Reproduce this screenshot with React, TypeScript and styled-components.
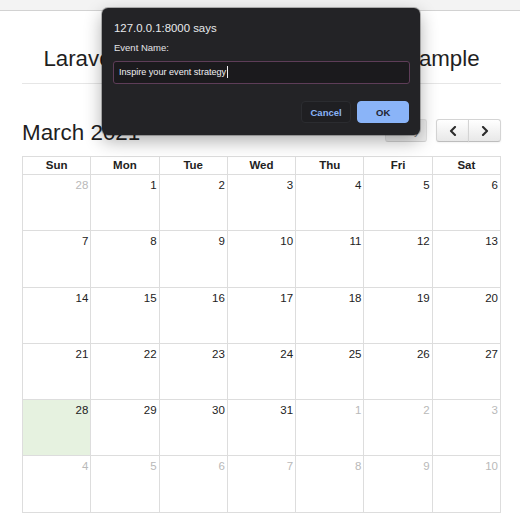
import React from "react";
import styled, { createGlobalStyle } from "styled-components";

const GlobalStyle = createGlobalStyle`
  html, body { margin: 0; padding: 0; background: #ffffff; }
  body { font-family: "Liberation Sans", Arial, Helvetica, sans-serif; color: #222; }
  * { box-sizing: border-box; }
`;

const Page = styled.div`
  position: relative;
  width: 520px;
  height: 523px;
  overflow: hidden;
  background: #fff;
`;

const BrowserStrip = styled.div`
  height: 11px;
  background: #f3f3f3;
  border-bottom: 1px solid #d2d2d2;
`;

const Container = styled.div`
  padding: 0 19px 0 22px;
`;

const PageTitle = styled.h2`
  margin: 35px 0 0;
  font-size: 22.3px;
  line-height: 26px;
  font-weight: 400;
  text-align: center;
  color: #1f1f1f;
  white-space: nowrap;
`;

const Rule = styled.hr`
  margin: 11px 0 0;
  border: 0;
  border-top: 1px solid #e6e6e6;
  height: 0;
`;

const Toolbar = styled.div`
  display: flex;
  justify-content: space-between;
  align-items: flex-start;
  margin-top: 35px;
`;

const MonthTitle = styled.h2`
  margin: 0;
  font-size: 22.4px;
  line-height: 27px;
  font-weight: 400;
  color: #1f1f1f;
`;

const ButtonRow = styled.div`
  display: flex;
  gap: 9px;
`;

const FcButton = styled.button<{ $disabled?: boolean }>`
  height: 23px;
  padding: 0 7px;
  margin: 0;
  border: 1px solid #d4d4d4;
  border-bottom-color: #bdbdbd;
  background: linear-gradient(#ffffff, #e8e8e8);
  color: #333;
  font-family: inherit;
  font-size: 11px;
  display: flex;
  align-items: center;
  justify-content: center;
  box-shadow: inset 0 1px 0 rgba(255,255,255,0.3), 0 1px 2px rgba(0,0,0,0.05);
  opacity: ${(p) => (p.$disabled ? 0.65 : 1)};
  ${(p) => (p.$disabled ? "background: #e6e6e6; box-shadow: none;" : "")}
`;

const TodayButton = styled(FcButton)`
  width: 42px;
  border-radius: 3px;
`;

const ButtonGroup = styled.div`
  display: flex;
`;

const NavButton = styled(FcButton)<{ $side: "left" | "right" }>`
  width: 33px;
  border-radius: ${(p) => (p.$side === "left" ? "3px 0 0 3px" : "0 3px 3px 0")};
  ${(p) => (p.$side === "right" ? "margin-left: -1px;" : "")}
`;

const Calendar = styled.div`
  margin-top: 10px;
  width: 479px;
  display: grid;
  grid-template-columns: repeat(7, 1fr);
  border-top: 1px solid #dddddd;
  border-left: 1px solid #dddddd;
`;

const HeadCell = styled.div`
  height: 18px;
  border-right: 1px solid #dddddd;
  border-bottom: 1px solid #dddddd;
  font-size: 11.5px;
  font-weight: 700;
  line-height: 17px;
  text-align: center;
  color: #222;
`;

const DayCell = styled.div<{ $other?: boolean; $today?: boolean }>`
  height: 56.3px;
  border-right: 1px solid #dddddd;
  border-bottom: 1px solid #dddddd;
  background: ${(p) => (p.$today ? "#e6f2e0" : "transparent")};
  padding: 2px 2px 0 0;
  text-align: right;
  font-size: 11.5px;
  line-height: 16px;
  color: ${(p) => (p.$other ? "#b9b9b9" : "#222")};
`;

const Dialog = styled.div`
  position: absolute;
  left: 102px;
  top: 8px;
  width: 318px;
  height: 127px;
  background: #232326;
  border-radius: 6px;
  box-shadow: 0 6px 18px rgba(0, 0, 0, 0.32), 0 0 0 1px rgba(0,0,0,0.25);
  padding: 12.5px 11px 0 12px;
  display: flex;
  flex-direction: column;
`;

const DialogTitle = styled.div`
  font-size: 11.4px;
  line-height: 14px;
  color: #e8eaed;
`;

const DialogLabel = styled.div`
  margin-top: 7.7px;
  font-size: 9.5px;
  line-height: 12px;
  color: #e3e3e6;
`;

const PromptInput = styled.div`
  margin-top: 6.8px;
  margin-left: -1px;
  height: 23px;
  width: 297px;
  border: 1.5px solid #5e3d58;
  border-radius: 3px;
  background: #1b1a1d;
  display: flex;
  align-items: center;
  padding-left: 5px;
  font-size: 9.1px;
  color: #f1f1f3;
  white-space: nowrap;
`;

const Caret = styled.span`
  display: inline-block;
  width: 1px;
  height: 12px;
  margin-left: 1px;
  background: #f1f1f3;
`;

const DialogActions = styled.div`
  margin-top: 17px;
  display: flex;
  justify-content: flex-end;
  gap: 6px;
`;

const DialogButton = styled.button<{ $primary?: boolean }>`
  height: 22.5px;
  width: ${(p) => (p.$primary ? "51.6px" : "50.7px")};
  border-radius: 4px;
  border: 1px solid ${(p) => (p.$primary ? "#8ab4f8" : "#2b2c30")};
  background: ${(p) => (p.$primary ? "#8ab4f8" : "#1f1f22")};
  color: ${(p) => (p.$primary ? "#1f2330" : "#8ab4f8")};
  font-family: inherit;
  font-size: 9.5px;
  font-weight: 700;
  padding: 0;
  margin: 0;
`;

const Chevron = ({ dir }: { dir: "left" | "right" }) => (
  <svg width="8" height="10" viewBox="0 0 8 10" aria-hidden="true">
    <polyline
      points={dir === "left" ? "6,1 2,5 6,9" : "2,1 6,5 2,9"}
      fill="none"
      stroke="#2b2b2b"
      strokeWidth="2.1"
      strokeLinecap="round"
      strokeLinejoin="round"
    />
  </svg>
);

const days = ["Sun", "Mon", "Tue", "Wed", "Thu", "Fri", "Sat"];

type Day = { n: number; other?: boolean; today?: boolean };

const buildWeeks = (): Day[] => {
  const cells: Day[] = [{ n: 28, other: true }];
  for (let i = 1; i <= 31; i++) cells.push({ n: i, today: i === 28 });
  for (let i = 1; i <= 10; i++) cells.push({ n: i, other: true });
  return cells;
};

export default function App() {
  const cells = buildWeeks();
  return (
    <Page>
      <GlobalStyle />
      <BrowserStrip />
      <Container>
        <PageTitle>Laravel 8 FullCalendar Ajax CRUD Example</PageTitle>
        <Rule />
        <Toolbar>
          <MonthTitle>March 2021</MonthTitle>
          <ButtonRow>
            <TodayButton $disabled>today</TodayButton>
            <ButtonGroup>
              <NavButton $side="left">
                <Chevron dir="left" />
              </NavButton>
              <NavButton $side="right">
                <Chevron dir="right" />
              </NavButton>
            </ButtonGroup>
          </ButtonRow>
        </Toolbar>
        <Calendar>
          {days.map((d) => (
            <HeadCell key={d}>{d}</HeadCell>
          ))}
          {cells.map((c, i) => (
            <DayCell key={i} $other={c.other} $today={c.today}>
              {c.n}
            </DayCell>
          ))}
        </Calendar>
      </Container>
      <Dialog>
        <DialogTitle>127.0.0.1:8000 says</DialogTitle>
        <DialogLabel>Event Name:</DialogLabel>
        <PromptInput>
          Inspire your event strategy
          <Caret />
        </PromptInput>
        <DialogActions>
          <DialogButton>Cancel</DialogButton>
          <DialogButton $primary>OK</DialogButton>
        </DialogActions>
      </Dialog>
    </Page>
  );
}
